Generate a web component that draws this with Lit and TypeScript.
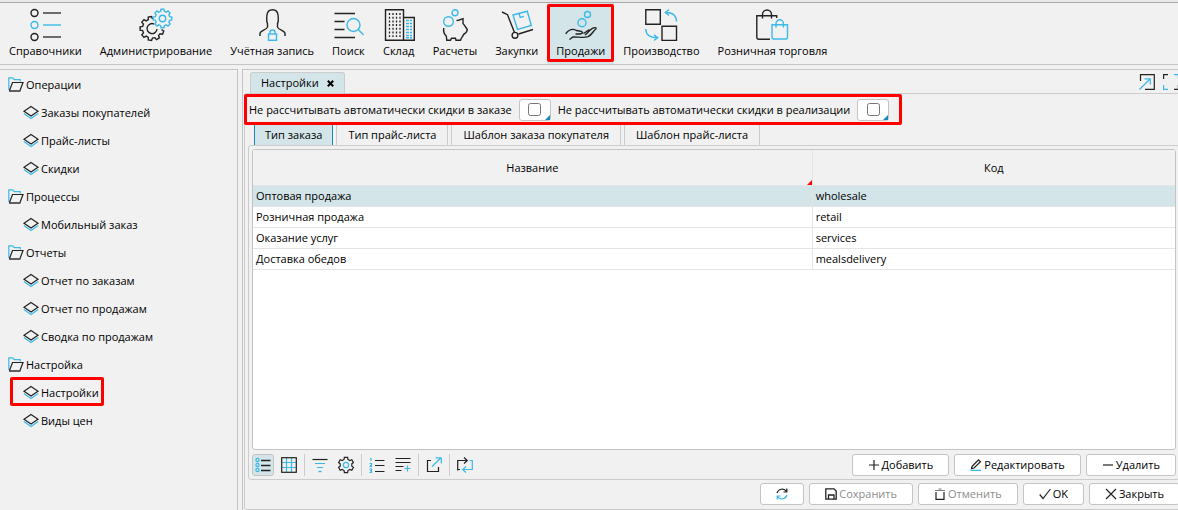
import { LitElement, html, svg, css, nothing, SVGTemplateResult, TemplateResult } from "lit";
import { customElement, state } from "lit/decorators.js";
import { classMap } from "lit/directives/class-map.js";

/** Outline of a gear, starting at angle `from` (degrees) and covering `count` teeth. */
function gear(cx: number, cy: number, outer: number, inner: number, teeth: number, from = 0, count = teeth): string {
  const step = 360 / teeth;
  const pt = (r: number, a: number) => {
    const t = (a * Math.PI) / 180;
    return `${(cx + r * Math.cos(t)).toFixed(2)} ${(cy + r * Math.sin(t)).toFixed(2)}`;
  };
  const pts: string[] = [];
  for (let i = 0; i < count; i++) {
    const a = from + i * step;
    pts.push(pt(inner, a - step * 0.32), pt(outer, a - step * 0.2), pt(outer, a + step * 0.2), pt(inner, a + step * 0.32));
  }
  return "M" + pts.join("L") + (count === teeth ? "Z" : "");
}

const big: Record<string, SVGTemplateResult> = {
  list: svg`
    <circle cx="5.5" cy="4" r="3.5"/><path d="M14 4H32M14 28H32" opacity=".85"/>
    <g class="b"><circle cx="5.5" cy="16" r="3.5"/><path d="M14 16H32"/></g>
    <circle cx="5.5" cy="28" r="3.5"/>`,
  gears: svg`
    <path d="${gear(12, 19.5, 12, 9.6, 9, 20, 7)}"/><path d="M14 15a5 5 0 1 0 3 5"/>
    <g class="b"><path d="${gear(22.5, 9.5, 9.4, 7.4, 8, 0)}"/><circle cx="22.5" cy="9.5" r="3.2"/></g>`,
  user: svg`
    <path d="M4 27v-2.5c0-3 7-3.500 7.500-6.500v-3.500c-1-1.500-1-4-.6-8C11.300 2.500 13.500 .8 16.500 .8s5.200 1.700 5.600 5.700c.4 4 .4 6.500-.6 8V18c.5 3 7.500 3.500 7.500 6.500V27"/>
    <g class="b"><rect x="12.500" y="25" width="8" height="6.300"/><path d="M14 25v-1.500a2.500 2.500 0 0 1 5 0V25"/></g>`,
  search: svg`
    <path d="M2.500 4.500H23M2.500 12.500H12.500M2.500 20.500H12.500M2.500 28.500H23"/>
    <g class="b"><circle cx="21.500" cy="16" r="6.500"/><path d="M26.300 20.500L31.500 26"/></g>`,
  store: svg`
    <path d="M2.500 31.300V.7H20.500V31.300ZM20.500 8.500H31.300V31.300H20.500"/>
    <path d="M6.500 4V28M10 4V28M13.500 4V28M17 4V28" stroke-dasharray="2 1.700" stroke-width="1.300"/>
    <path class="b" d="M23 11.500h3m1 0h2M23 14.500h3m1 0h2M23 17.500h3m1 0h2M23 20.500h3m1 0h2M23 23.500h3m1 0h2M23 26.500h3m1 0h2M23 28.800h3m1 0h2"/>`,
  pig: svg`
    <path d="M17.500 11.500L19.500 11.200L24 9.700V14.500C26 16.500 26.500 18.500 28.300 20.500C28 23.500 26.500 24.500 24.500 25.500C24 27.500 22 28.500 21.500 31.300H17L16.500 29.300H12.500L11.500 31.300H7.800L7.300 27C5 25 4.300 22 4.700 19"/>
    <g class="b"><circle cx="9.500" cy="12.500" r="4.800"/><circle cx="16" cy="3.800" r="3"/></g>`,
  cart: svg`
    <path d="M1 3L6.500 5.700L13.500 23.500M17.500 25L32 20.500"/><circle cx="14" cy="26.300" r="2.900"/>
    <path class="b" d="M12 6L26.300 2.200L30.300 16.500L16.500 20.500ZM18 4.500L19.200 8.500L23 7.400"/>`,
  hand: svg`
    <path d="M.7 24.700C4 20.500 8 19.500 11.500 21.500C14 22.500 17 21.500 17.500 23.500C17 25.500 14 25 10.500 25M18.500 24.500L24.500 20.500M20 26C23 24 24.500 21.300 27 19.700C29 18.500 31.500 18 31 19.700C28.500 21.500 27 26 23 27.700C18 29.500 12 27.500 8 28L4.500 30.500"/>
    <g class="b"><circle cx="17" cy="13.700" r="4"/><circle cx="22.500" cy="5.500" r="3"/></g>`,
  factory: svg`
    <path d="M.8 .8H15.300V15.300H.8ZM17 17.200H31.500V31.400H17Z"/>
    <path class="b" d="M31.500 12.500C31.500 6 28 3.500 20.500 3.500M24 .5L20.300 3.500L24 6.500M.8 20C.8 26 4 28.700 12.300 28.700M9 25.700L12.700 28.700L9 31.500"/>`,
  bags: svg`
    <path d="M14 30.300H3C1.500 30.300 .8 29.500 .8 28V6.700H20.700V9M6.500 9.500V5.500a4.500 4.500 0 0 1 9 0V9.500"/>
    <path class="b" d="M16 15.700H31.500V28.500a1.500 1.500 0 0 1-1.500 1.500H17.500a1.500 1.500 0 0 1-1.500-1.500ZM20 18.500V14.500a3.700 3.700 0 0 1 7.400 0V18.500"/>`,
};

const small: Record<string, SVGTemplateResult> = {
  folder: svg`
    <path class="b" d="M.8 13V.8H4.800L6.300 2.700H12.300V4.500"/>
    <path d="M1.500 13.500L4.500 5.500H15L12 13.500"/><path d="M1 14H12.500" stroke-width="2" opacity=".7"/>`,
  layers: svg`
    <path class="b" d="M.8 8.500L8 13.500L15.200 8.500"/><path d="M8 1.500L15 6.200L8 11L1 6.200Z"/>`,
  popout: svg`
    <path d="M1.500 7V.7H15.300V15.300H6"/><path class="b" d="M.5 15.500L11 5M5.500 4.800H11.300V10.500"/>`,
  expand: svg`
    <path d="M.6 5V.6H5M11 15.400H15.400V11"/><path class="b" d="M.6 11V15.400H5M11 .6H15.400V5"/>`,
  rows: svg`
    <g class="b"><circle cx="2.500" cy="3" r="1.600"/><circle cx="2.500" cy="8" r="1.600"/><circle cx="2.500" cy="13" r="1.600"/></g>
    <path d="M6 3.500H15.500M6 8.500H15.500M6 13.500H15.500" stroke-width="1.500"/>`,
  grid: svg`
    <path class="b" d="M5.500 1V15M10.500 1V15M1 5.500H15M1 10.500H15"/><rect x=".7" y=".7" width="14.600" height="14.600"/>`,
  filter: svg`
    <path d="M.5 2.500H15.500"/><path class="b" d="M3 6.500H13M5 10.500H11"/><path class="b" d="M6.500 14.500H9.500" stroke-width="1.500"/>`,
  gear: svg`
    <path d="${gear(8, 8, 7.8, 5.9, 6, 30)}"/><circle class="b" cx="8" cy="8" r="2.600"/>`,
  numbers: svg`
    <path d="M6 3.500H15.500M6 8.500H15.500M6 14.500H15.500"/>
    <path class="b" d="M1 1.500H2V4M.5 6.500H2.500V8.500H1M.5 9.500H3M.5 12H2.500V15.500H.5M1 13.700H2.500"/>`,
  addrow: svg`
    <path d="M.5 1.500H15.500M.5 5.500H15.500M.5 9.500H8.500M.5 13.500H6.500"/><path class="b" d="M9.500 11.500H15.500M12.500 8.500V14.500"/>`,
  share: svg`
    <path d="M5 3.500H1.500V14.500H12.500V10"/><path class="b" d="M6 9.500L15 .8M9.500 .8H15.300V6.500"/>`,
  repeat: svg`
    <path d="M.7 13.500V3.500H10M7 .5L10.300 3.500L7 6.500M.7 12.500H3"/>
    <path class="b" d="M12.500 3.500H15.300V12.500H6M9 9.500L5.700 12.500L9 15.500"/>`,
  plus: svg`<path d="M1 6H11M6 1V11"/>`,
  minus: svg`<path d="M1 6H11"/>`,
  pencil: svg`
    <path d="M2 7.500L8.500 .8L10.500 2.800L4 9L1.500 9.700Z"/><path class="b" d="M.5 11.400H11" stroke-width="1.300"/>`,
  refresh: svg`
    <path d="M1 5C2 1 8 -.5 10.500 3.500M10.800 .5V4H7.500"/><path class="b" d="M11 7C10 11 4 12.500 1.500 8.500M1.200 11.500V8H4.500"/>`,
  save: svg`
    <path d="M.8 .8H9L11.200 3V11.200H.8ZM3.500 11V7H9V11" stroke-width="1.300"/>`,
  trash: svg`
    <path d="M2 4V11.300H10V4"/><path d="M1 2.500H11M4.500 1H7.500" opacity=".6"/>`,
  check: svg`<path d="M.7 6.500L4 10.500L11.500 1"/>`,
  cross: svg`<path d="M1 1L11 11M11 1L1 11"/>`,
};

function icon(shape: SVGTemplateResult, size: number): TemplateResult {
  return html`<svg class="icon" width=${size} height=${size} viewBox="0 0 ${size} ${size}" aria-hidden="true">${shape}</svg>`;
}

const base = css`
  * { box-sizing: border-box; }
  button, input, table { font: inherit; color: inherit; }
  button { margin: 0; cursor: pointer; }
  a { color: inherit; text-decoration: none; }
  .icon { display: block; flex: none; fill: none; stroke: #222; stroke-width: 1.2; overflow: visible; }
  .icon .b { stroke: #3bb9ea; }
  .marked { position: relative; }
  .marked::after {
    content: "";
    position: absolute;
    inset: 0;
    border: 3px solid #f00;
    border-radius: 2px;
    pointer-events: none;
  }
`;

@customElement("top-nav")
class TopNav extends LitElement {
  @state() current = "Продажи";

  items: [string, string][] = [
    ["Справочники", "list"],
    ["Администрирование", "gears"],
    ["Учётная запись", "user"],
    ["Поиск", "search"],
    ["Склад", "store"],
    ["Расчеты", "pig"],
    ["Закупки", "cart"],
    ["Продажи", "hand"],
    ["Производство", "factory"],
    ["Розничная торговля", "bags"],
  ];

  static styles = [base, css`
    :host { display: block; border-top: 2px solid #e8e8e8; }
    .bar { display: flex; border-top: 1px solid #a8a8a8; border-bottom: 1px solid #c4c4c4; height: 63px; }
    .item {
      display: flex; flex-direction: column; align-items: center;
      padding: 6px 9px 0; border: 0; background: none; white-space: nowrap; line-height: 20px;
    }
    .item .icon { stroke-width: 1.4; }
    .current { background: #d3e5e9; }
    .current::after { inset: 1px 0 2px; }
  `];

  render() {
    return html`<nav class="bar">
      ${this.items.map(([label, name]) => html`
        <button class=${classMap({ item: true, current: label === this.current, marked: label === this.current })}
          @click=${() => (this.current = label)}>
          ${icon(big[name], 32)}<span>${label}</span>
        </button>`)}
    </nav>`;
  }
}

@customElement("side-tree")
class SideTree extends LitElement {
  groups: [string, string[]][] = [
    ["Операции", ["Заказы покупателей", "Прайс-листы", "Скидки"]],
    ["Процессы", ["Мобильный заказ"]],
    ["Отчеты", ["Отчет по заказам", "Отчет по продажам", "Сводка по продажам"]],
    ["Настройка", ["Настройки", "Виды цен"]],
  ];

  static styles = [base, css`
    :host { display: block; padding-top: 1px; }
    ul { list-style: none; margin: 0; padding: 0; }
    .node { display: inline-flex; align-items: center; gap: 2px; height: 28px; padding: 0 4px 0 8px; vertical-align: top; white-space: nowrap; }
    .leaf { padding: 0 0 0 13px; margin-left: 10px; }
    .marked::after { inset: -2px -5px 1px 0; }
  `];

  render() {
    return html`<ul>
      ${this.groups.map(([title, leaves]) => html`<li>
        <a class="node" href="#">${icon(small.folder, 16)}${title}</a>
        <ul>${leaves.map((l) => html`<li>
          <a class=${classMap({ node: true, leaf: true, marked: l === "Настройки" })} href="#">${icon(small.layers, 16)}${l}</a>
        </li>`)}</ul>
      </li>`)}
    </ul>`;
  }
}

@customElement("settings-form")
class SettingsForm extends LitElement {
  @state() tab = 0;
  @state() selected = 0;

  tabs = ["Тип заказа", "Тип прайс-листа", "Шаблон заказа покупателя", "Шаблон прайс-листа"];
  rows = [
    ["Оптовая продажа", "wholesale"],
    ["Розничная продажа", "retail"],
    ["Оказание услуг", "services"],
    ["Доставка обедов", "mealsdelivery"],
  ];

  static styles = [base, css`
    :host { display: flex; flex-direction: column; min-height: 0; }
    .head { display: flex; align-items: flex-end; height: 23px; padding-left: 7px; }
    .doc {
      display: flex; align-items: center; gap: 8px; height: 21px; padding: 0 10px;
      background: #d3e5e9; border: 1px solid #ccc; border-bottom: 0; border-radius: 3px 3px 0 0;
    }
    .close { border: 0; padding: 0; background: none; display: flex; }
    .close .icon { stroke: #000; stroke-width: 2; }
    .window { display: flex; align-self: center; gap: 8px; margin: 0 5px 0 auto; }
    .window button { border: 0; padding: 0; background: none; }
    .frame {
      flex: 1; display: flex; flex-direction: column; min-height: 0;
      margin: 0 0 0 1px; padding: 0 3px 4px;
      border: 1px solid #ccc; border-radius: 3px;
    }
    .options { display: flex; align-self: flex-start; align-items: center; height: 31px; padding: 0 13px 0 1px; gap: 7px; }
    .options::after { inset: 0 0 0 -4px; }
    .tick {
      position: relative; display: flex; align-items: center; justify-content: center;
      width: 32px; height: 22px; background: #fff; border: 1px solid #c4c4c4; border-radius: 3px;
    }
    .tick::after {
      content: ""; position: absolute; right: 0; bottom: 0;
      border: solid transparent; border-width: 0 0 5px 5px; border-bottom-color: #1588b8;
    }
    .tick input { width: 13px; height: 13px; margin: 0; }
    .tabs { display: flex; gap: 3px; padding-left: 6px; }
    .tab {
      height: 20px; padding: 0 11px; background: none; white-space: nowrap;
      border: 1px solid #ccc; border-width: 0 1px; line-height: 20px;
    }
    .tab.on { padding: 0 10px; background: #d3e5e9; border-color: #1588b8; }
    .panel {
      flex: 1; display: flex; flex-direction: column; min-height: 0;
      padding: 3px; border: 1px solid #ccc; border-radius: 3px;
    }
    .grid { flex: 1; min-height: 0; background: #fff; border: 1px solid #c4c4c4; border-radius: 3px; overflow: hidden; }
    table { width: 100%; border-collapse: separate; border-spacing: 0; table-layout: fixed; }
    .name { width: 60.7%; }
    th {
      position: relative; height: 36px; padding: 0; font-weight: 400; background: #f1f1f1;
      border-bottom: 1px solid #e4e4e4;
    }
    th:first-child, td:first-child { border-right: 1px solid #e4e4e4; }
    th:first-child::after {
      content: ""; position: absolute; right: 0; bottom: 0;
      border: solid transparent; border-width: 0 0 5px 5px; border-bottom-color: #f00;
    }
    td { height: 21px; padding: 0 3px; border-bottom: 1px solid #e4e4e4; line-height: 20px; }
    tr.on td { background: #d3e5e9; }
    .tools { display: flex; align-items: center; gap: 4px; height: 22px; margin-top: 4px; }
    .tool {
      display: flex; align-items: center; justify-content: center; width: 22px; height: 22px;
      padding: 0; border: 1px solid transparent; border-radius: 3px; background: none;
    }
    .tool.on { background: #d3e5e9; border-color: #c4c4c4; }
    .sep { width: 1px; height: 22px; background: #ccc; }
    .actions { display: flex; gap: 5px; margin-left: auto; }
    .btn {
      display: flex; align-items: center; justify-content: center; gap: 2px; height: 22px; padding: 0 15px;
      background: #fff; border: 1px solid #c4c4c4; border-radius: 3px; white-space: nowrap; line-height: 20px;
    }
    .btn:disabled { color: #8c8c8c; }
    .foot { display: flex; justify-content: flex-end; gap: 5px; padding-top: 3px; }
  `];

  button(label: string, name: string, disabled = false) {
    return html`<button class="btn" ?disabled=${disabled} aria-label=${label || "Обновить"}>
      ${icon(small[name], 12)}${label || nothing}
    </button>`;
  }

  render() {
    const tool = (name: string, label: string, on = false) =>
      html`<button class=${classMap({ tool: true, on })} aria-label=${label}>${icon(small[name], 16)}</button>`;
    const sep = html`<span class="sep"></span>`;
    return html`
      <div class="head">
        <div class="doc">Настройки
          <button class="close" aria-label="Закрыть вкладку">
            <svg class="icon" width="7" height="7" viewBox="0 0 7 7" aria-hidden="true"><path d="M.8 .8L6.200 6.200M6.200 .8L.8 6.200"/></svg>
          </button>
        </div>
        <div class="window">
          <button aria-label="Открыть в окне">${icon(small.popout, 16)}</button>
          <button aria-label="Развернуть">${icon(small.expand, 16)}</button>
        </div>
      </div>
      <div class="frame">
        <div class="options marked">
          <label for="order">Не рассчитывать автоматически скидки в заказе</label>
          <span class="tick"><input type="checkbox" id="order"></span>
          <label for="shipment">Не рассчитывать автоматически скидки в реализации</label>
          <span class="tick"><input type="checkbox" id="shipment"></span>
        </div>
        <div class="tabs">
          ${this.tabs.map((t, i) => html`
            <button class=${classMap({ tab: true, on: i === this.tab })} @click=${() => (this.tab = i)}>${t}</button>`)}
        </div>
        <div class="panel">
          <div class="grid">
            <table>
              <thead><tr><th class="name">Название</th><th>Код</th></tr></thead>
              <tbody>
                ${this.rows.map((r, i) => html`
                  <tr class=${i === this.selected ? "on" : ""} @click=${() => (this.selected = i)}>
                    <td>${r[0]}</td><td>${r[1]}</td>
                  </tr>`)}
              </tbody>
            </table>
          </div>
          <div class="tools">
            ${tool("rows", "Список", true)}${tool("grid", "Таблица")}${sep}
            ${tool("filter", "Фильтр")}${tool("gear", "Настройка")}${sep}
            ${tool("numbers", "Нумерация")}${tool("addrow", "Добавить строку")}${sep}
            ${tool("share", "Экспорт")}${sep}${tool("repeat", "Обновлять")}
            <div class="actions">
              ${this.button("Добавить", "plus")}
              ${this.button("Редактировать", "pencil")}
              ${this.button("Удалить", "minus")}
            </div>
          </div>
        </div>
        <div class="foot">
          ${this.button("", "refresh")}
          ${this.button("Сохранить", "save", true)}
          ${this.button("Отменить", "trash", true)}
          ${this.button("OK", "check")}
          ${this.button("Закрыть", "cross")}
        </div>
      </div>`;
  }
}

@customElement("app-root")
class AppRoot extends LitElement {
  static styles = [base, css`
    :host {
      display: flex; flex-direction: column; height: 100vh; overflow: hidden;
      background: #f1f1f1; color: #000; font: 11px/16px "Open Sans", "Noto Sans", sans-serif;
    }
    .body { flex: 1; display: flex; gap: 4px; min-height: 0; margin-top: 4px; }
    .side { flex: none; width: 238px; border: 1px solid #c4c4c4; border-left: 0; border-bottom: 0; }
    .main { flex: 1; min-width: 0; border: 1px solid #c4c4c4; border-width: 1px 0 0 1px; display: flex; }
    .form { flex: 1; min-width: 0; margin-right: -6px; }
  `];

  render() {
    return html`
      <top-nav></top-nav>
      <div class="body">
        <side-tree class="side"></side-tree>
        <main class="main"><settings-form class="form"></settings-form></main>
      </div>`;
  }
}
